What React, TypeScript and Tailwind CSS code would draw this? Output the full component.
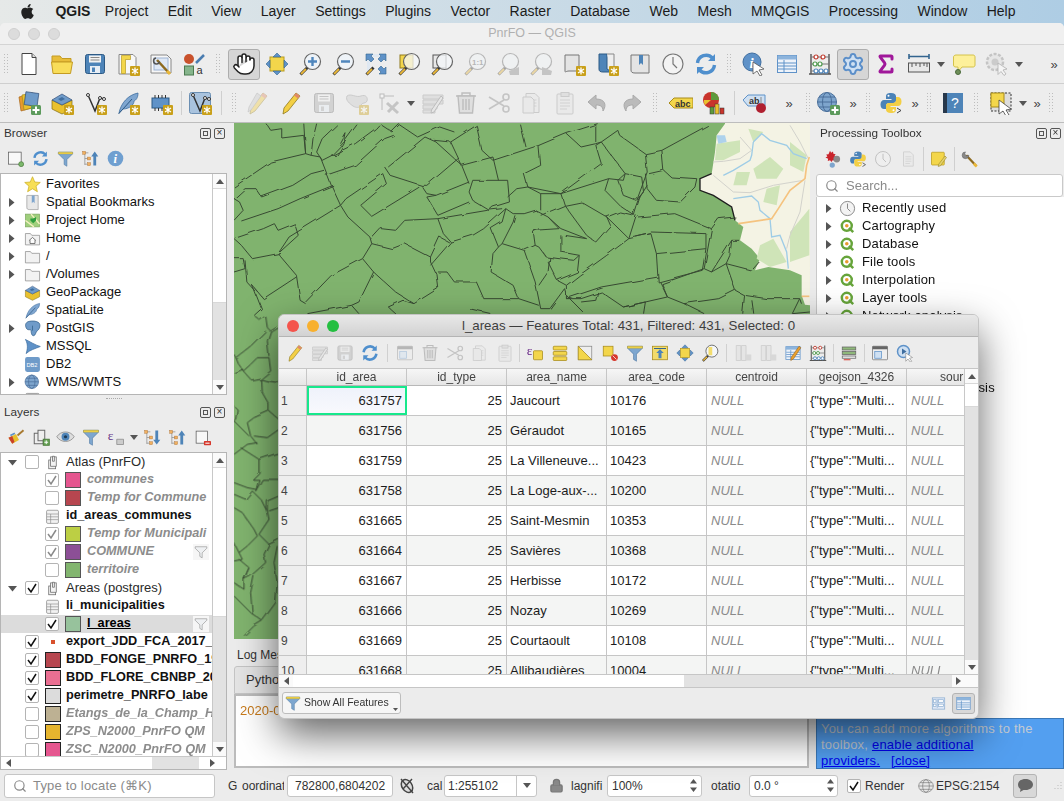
import { type ReactNode } from "react";
import { FaApple } from "react-icons/fa";
import { Hand, Search, Sigma, Settings, Lock } from "lucide-react";

// little badge with the asterisk used on the "new ..." actions
const Star = (
  <g>
    <rect x="14" y="14" width="10" height="10" rx="1" fill="#c9a01a" />
    <path d="M19 15.5v7M16 17l6 4M22 17l-6 4" stroke="#fff" strokeWidth="1.3" />
  </g>
);

const lens = (inner: ReactNode, fill = "#f4f7fa") => (
  <>
    <path d="M2.5 22.5l7-7" stroke="#333" strokeWidth="3" />
    <path d="M3 22l5-5" stroke="#eab83a" strokeWidth="1.8" />
    <circle cx="14.5" cy="9.5" r="8" fill={fill} stroke="#666" strokeWidth="1.2" />
    {inner}
  </>
);

const arrows = (
  <g fill="#5f92c8" stroke="#33648f" strokeWidth="0.6">
    <path d="M12 1l4 4h-8zM12 23l4-4h-8zM1 12l4-4v8zM23 12l-4-4v8z" />
  </g>
);

const refresh = (
  <g fill="none" stroke="#4f8fcd" strokeWidth="3.4">
    <path d="M3.5 11a8.7 8.7 0 0 1 15-5" />
    <path d="M20.5 13a8.7 8.7 0 0 1-15 5" />
    <path d="M21 2v7h-7zM3 22v-7h7z" fill="#4f8fcd" stroke="none" />
  </g>
);

const table = (
  <g>
    <rect x="2.5" y="3.5" width="19" height="17" fill="#eef3fa" stroke="#5f92c8" />
    <rect x="2.5" y="3.5" width="19" height="4" fill="#8db4dc" />
    <path d="M3 11h18M3 14h18M3 17h18M9 8v12" stroke="#5f92c8" />
  </g>
);

const doc = (
  <g>
    <path d="M6 2.5h9l4 4v15H6z" fill="#e8e8e8" stroke="#999" />
    <path d="M8.5 9h8M8.5 12h8M8.5 15h8M8.5 18h6" stroke="#aaa" />
  </g>
);

const filter = (
  <g>
    <path d="M2 3h20v2.5l-8 8V23l-4-2.5v-7l-8-8z" fill="#7da6cf" stroke="#45729d" strokeWidth="0.7" />
    <path d="M2 3h20v2.6H2z" fill="#f3d64b" stroke="#b99b1e" strokeWidth="0.5" />
  </g>
);

const floppy = (c: string, e: string) => (
  <g>
    <rect x="2.5" y="2.5" width="19" height="19" rx="2" fill={c} stroke={e} />
    <rect x="6" y="3.5" width="12" height="7" fill="#f2f2f2" />
    <path d="M7.5 5.5h9M7.5 8h9" stroke="#888" />
    <rect x="7" y="14" width="10" height="7" fill="#e8eef5" />
    <rect x="9" y="15.5" width="3" height="4.5" fill={c} />
  </g>
);

const python = (
  <g>
    <path d="M12 2c-4 0-5 1.5-5 3.5V8h5.5v1H5c-2 0-3.5 1.5-3.5 4.5S3 18 5 18h2v-3c0-2 1.5-3 3.5-3h4c1.5 0 2.5-1 2.5-2.5V5.5C17 3.5 15.5 2 12 2z" fill="#4b83b8" />
    <path d="M12 22c4 0 5-1.5 5-3.5V16h-5.5v-1H19c2 0 3.5-1.5 3.5-4.5S21 6 19 6h-2v3c0 2-1.5 3-3.5 3h-4C8 12 7 13 7 14.5v4C7 20.5 8.5 22 12 22z" fill="#f3cf45" />
    <circle cx="9.5" cy="4.8" r="1" fill="#fff" />
    <circle cx="14.5" cy="19.2" r="1" fill="#fff" />
  </g>
);

const clock = (
  <g fill="none" stroke="#777" strokeWidth="1.2">
    <circle cx="12" cy="12" r="10" fill="#f3f3f3" />
    <path d="M12 5v7l4 4" />
  </g>
);

const cursor = <path d="M13 11l9 6-4 1 3 4-2 1.5-3-4-3 3z" fill="#fff" stroke="#555" strokeWidth="0.8" />;

const pencil = (
  <g>
    <path d="M17 2l4 3-12 15-5 3 1-6z" fill="#f3cf45" stroke="#8f7a1e" strokeWidth="0.8" />
    <path d="M17 2l4 3-2 2.5-4-3z" fill="#e08a6a" />
  </g>
);

const feather = (
  <g>
    <path d="M3 22C5 12 12 4 22 2c0 5-2 7-4 8 0 4-5 8-11 8z" fill="#7fa6d0" stroke="#3f6ea0" strokeWidth="0.8" />
    <path d="M2.5 23L16 8" stroke="#2f5a85" />
  </g>
);

const vnode = (
  <g>
    <path d="M5 4l7 16 5-13 4 1" fill="none" stroke="#333" strokeWidth="1.5" />
    <circle cx="5" cy="4" r="1.5" fill="#fff" stroke="#333" />
    <circle cx="17" cy="7" r="1.5" fill="#fff" stroke="#333" />
    <circle cx="21" cy="8" r="1.5" fill="#fff" stroke="#333" />
  </g>
);

const box = (
  <g>
    <path d="M2 9l10 5 10-5v9l-10 5-10-5z" fill="#e9c12e" stroke="#806a10" strokeWidth="0.7" />
    <path d="M2 9l10-6 10 6-10 5z" fill="#6f9bc9" stroke="#33507a" strokeWidth="0.7" />
    <path d="M8 8l4-2 3 2-4 2z" fill="#3f6ea0" />
  </g>
);

const globe = (
  <g fill="none" stroke="#4a6f9a">
    <circle cx="11" cy="11" r="9.5" fill="#7ea5cd" />
    <ellipse cx="11" cy="11" rx="4.5" ry="9.5" />
    <path d="M1.5 11h19M3 6h16M3 16h16" />
  </g>
);

const qgis = (
  <g fill="none">
    <circle cx="11" cy="11" r="7" stroke="#66a43a" strokeWidth="3.5" />
    <path d="M14 14l6 6" stroke="#66a43a" strokeWidth="3.5" />
    <circle cx="11" cy="11" r="2.5" fill="#e89a2e" />
  </g>
);

const folderGrey = <path d="M2 5h7l2 2.5h11V21H2z" fill="#f2f2f2" stroke="#888" />;

const glyphs: Record<string, ReactNode> = {
  pan: <Hand x={0} y={0} width={24} height={24} color="#222" fill="#fff" strokeWidth={1.5} />,
  gear: <Settings x={0} y={0} width={24} height={24} color="#5c8fc9" fill="#cfe0f2" strokeWidth={2} />,
  sigma: <Sigma x={0} y={0} width={24} height={24} color="#a0189a" strokeWidth={3} />,
  newDoc: (
    <g>
      <path d="M5 1.5h10l4 4V22.5H5z" fill="#fff" stroke="#444" />
      <path d="M15 1.5v4h4" fill="#ddd" stroke="#444" />
    </g>
  ),
  folder: (
    <g>
      <path d="M2 4h8l2 2.5h9V10H2z" fill="#e8bd3a" stroke="#c49b22" />
      <path d="M1.5 10h21l-2 11.5H3z" fill="#f8dd5a" stroke="#c49b22" />
    </g>
  ),
  save: floppy("#4e84b8", "#2d5a85"),
  layout: (
    <g>
      <path d="M3 2.5h14l3 3V22H3z" fill="#f7f7f7" stroke="#888" />
      <path d="M5.5 3.5h9v4h-5v14h-4z" fill="#f3d64b" stroke="#b99b1e" strokeWidth="0.7" />
      {Star}
    </g>
  ),
  layoutMgr: (
    <g>
      <path d="M2 3h16l4 4v14H2z" fill="#f7f7f7" stroke="#888" />
      <rect x="5" y="6" width="14" height="12" fill="#dfe8f5" stroke="#9db4d4" />
      <path d="M8 8l12 13" stroke="#8d6a20" strokeWidth="2.5" />
      <path d="M7 6a3 3 0 1 0 3.5 3.5" fill="none" stroke="#555" strokeWidth="1.5" />
      <path d="M18 19l3 3" stroke="#eab83a" strokeWidth="3" />
    </g>
  ),
  style: (
    <g>
      <circle cx="7" cy="7" r="5" fill="#c9522c" />
      <path d="M14 11l8-8" stroke="#4a7cb0" strokeWidth="2.5" />
      <rect x="2.5" y="14" width="9" height="9" fill="#86b58c" stroke="#4b7a50" />
      <text x="14.5" y="22" fontSize="11" fill="#333">a</text>
    </g>
  ),
  panSel: (
    <g>
      <rect x="5" y="5" width="14" height="14" fill="#f3d64b" stroke="#b99b1e" />
      {arrows}
    </g>
  ),
  zoomIn: lens(<path d="M14.5 5v9M10 9.5h9" stroke="#4f86bd" strokeWidth="2.4" />, "#eef3f8"),
  zoomOut: lens(<path d="M10 9.5h9" stroke="#4f86bd" strokeWidth="2.4" />, "#eef3f8"),
  zoomFull: (
    <g>
      <path d="M3 2h18v3H6v15H3z" fill="#dfe8f2" />
      <g fill="#5f92c8" stroke="#33648f" strokeWidth="0.6">
        <path d="M2 2h7l-2 2 3 3-3 3-3-3-2 2zM22 2v7l-2-2-3 3-3-3 3-3-2-2zM22 22h-7l2-2-3-3 3-3 3 3 2-2z" />
      </g>
      <path d="M2.5 22.5l7-7" stroke="#333" strokeWidth="3" />
      <path d="M3 22l5-5" stroke="#eab83a" strokeWidth="1.8" />
    </g>
  ),
  zoomSel: (
    <g>
      <rect x="3" y="3" width="13" height="13" fill="#f3d64b" stroke="#8f7a1e" />
      {lens(null, "rgba(244,247,250,0.75)")}
    </g>
  ),
  zoomLayer: (
    <g>
      <rect x="3" y="3" width="13" height="13" fill="#e8e8e8" stroke="#555" />
      {lens(null, "rgba(244,247,250,0.75)")}
    </g>
  ),
  zoom11: lens(<text x="9" y="12.5" fontSize="8" fontWeight="bold" fill="#666">1:1</text>),
  zoomLast: lens(<path d="M23 15v8H14l-1-4zM17 19l4-3v6z" fill="#888" />),
  zoomNext: lens(<path d="M13 15v8h9l1-4z" fill="#888" />),
  bookNew: (
    <g>
      <path d="M3 3h14v16H7c-3 0-4 2-4 0z" fill="#e4e4e4" stroke="#777" />
      {Star}
    </g>
  ),
  bookBlue: (
    <g>
      <path d="M4 2h8v15l5 3H8c-3 0-4-1-4-3z" fill="#4e84b8" stroke="#2d5a85" />
      <path d="M12 2h7v18h-2" fill="#eee" stroke="#888" />
      {Star}
    </g>
  ),
  bookShow: (
    <g>
      <path d="M3 3h18v18H7c-3 0-4-1-4-3z" fill="#e4e4e4" stroke="#777" />
      <path d="M11 3h4v10l-2-2-2 2z" fill="#4e84b8" />
    </g>
  ),
  clock,
  refresh,
  identify: (
    <g>
      <circle cx="10" cy="10" r="9" fill="#5f92c8" stroke="#3f6ea0" />
      <text x="7.5" y="16" fontSize="15" fontStyle="italic" fontWeight="bold" fontFamily="Liberation Serif, serif" fill="#fff">i</text>
      <path d="M11 10l11 7-5 1 3 5-2 1-3-5-4 3z" fill="#fff" stroke="#555" strokeWidth="0.8" />
    </g>
  ),
  table,
  abacus: (
    <g>
      <path d="M3 2v20M21 2v20M1 22h22" stroke="#555" strokeWidth="1.4" />
      <path d="M3 5h18M3 12h18M3 19h18" stroke="#777" />
      <g fill="#fff" stroke="#c0392b" strokeWidth="1.2"><circle cx="8" cy="5" r="2" /><circle cx="15" cy="5" r="2" /></g>
      <g fill="#fff" stroke="#4d9a4d" strokeWidth="1.2"><circle cx="7" cy="12" r="2" /><circle cx="12" cy="12" r="2" /></g>
      <g fill="#fff" stroke="#4f86bd" strokeWidth="1.2"><circle cx="8" cy="19" r="2" /><circle cx="13" cy="19" r="2" /><circle cx="18" cy="19" r="2" /></g>
    </g>
  ),
  measure: (
    <g>
      <path d="M2 4.5h20M2 2v5M22 2v5" stroke="#33648f" strokeWidth="1.6" />
      <rect x="1.5" y="11" width="21" height="9" fill="#e8e8e8" stroke="#555" />
      <path d="M5 11v4M9 11v3M13 11v4M17 11v3M20 11v4" stroke="#555" />
    </g>
  ),
  tip: (
    <g>
      <path d="M4 3h17c1.5 0 2 1 2 2v8c0 1.5-1 2-2 2H10l-4 5v-5H4c-1.5 0-2.5-.5-2.5-2V5C1.5 4 2.5 3 4 3z" fill="#fdf09a" stroke="#d4c24a" />
      <circle cx="6" cy="20" r="2.5" fill="#6f8f5a" stroke="#4a6a3a" />
    </g>
  ),
  gearOff: (
    <g>
      <circle cx="10" cy="10" r="8" fill="#ddd" stroke="#888" strokeWidth="2.5" strokeDasharray="3 1.5" />
      <circle cx="10" cy="10" r="3.5" fill="#999" />
      {cursor}
    </g>
  ),
  addLayer: (
    <g>
      <path d="M2 6l11-3 2 14-11 3z" fill="#e89a2e" stroke="#a8651a" strokeWidth="0.7" />
      <path d="M5 4l11-2 2 14-11 3z" fill="#e9c12e" stroke="#a88b1a" strokeWidth="0.7" />
      <rect x="8" y="1.5" width="13" height="13" transform="rotate(8 14 8)" fill="#6f9bc9" stroke="#33507a" strokeWidth="0.7" />
      <rect x="14" y="14" width="10" height="10" rx="1.5" fill="#5c9a5c" />
      <path d="M19 15.5v7M15.5 19h7" stroke="#fff" strokeWidth="2" />
    </g>
  ),
  gpkg: <g>{box}{Star}</g>,
  vnode: <g>{vnode}{Star}</g>,
  feather: <g>{feather}{Star}</g>,
  chip: (
    <g>
      <rect x="3" y="7" width="17" height="10" fill="#5f92c8" stroke="#2d5a85" />
      <path d="M6 4v3M9.5 4v3M13 4v3M16.5 4v3M6 17v3M9.5 17v3M13 17v3" stroke="#333" />
      {Star}
    </g>
  ),
  vBlue: (
    <g>
      <rect x="1.5" y="1.5" width="21" height="21" rx="2" fill="#a9c3de" stroke="#6b8fb3" />
      {vnode}
      {Star}
    </g>
  ),
  pencils: <g>{pencil}<path d="M11 2l4 3-10 14-3 2 1-5z" fill="#ccc" stroke="#888" strokeWidth="0.6" /></g>,
  pencil,
  saveEdit: floppy("#aaa", "#777"),
  blob: (
    <g>
      <path d="M2 5c4-3 9 2 14 0s7 2 6 5-5 1-6 4-5 3-8 1-8-6-6-10z" fill="#ccc" stroke="#999" />
      {Star}
    </g>
  ),
  tools: (
    <g>
      <rect x="2" y="3" width="4" height="4" fill="#fff" stroke="#777" />
      <path d="M6 5h10M4 7v12" stroke="#777" />
      <path d="M9 12l11 10M20 11L10 21" stroke="#888" strokeWidth="3" />
    </g>
  ),
  tablePencil: (
    <g>
      <path d="M2 4h20v4H2zM2 9h20v4H2zM2 14h14v4H2zM2 19h12v3H2z" fill="#ccc" stroke="#999" />
      <path d="M20 5l2 2-9 14-3 1 .5-3z" fill="#ddd" stroke="#777" />
    </g>
  ),
  trash: (
    <g fill="none" stroke="#777" strokeWidth="1.4">
      <path d="M2 5h20M8 5V2h8v3" />
      <path d="M4 5l1.5 17h13L20 5z" fill="#ccc" />
      <path d="M9 8v11M12 8v11M15 8v11" />
    </g>
  ),
  scissors: (
    <g fill="none" stroke="#888" strokeWidth="1.6">
      <circle cx="19" cy="6" r="3" />
      <circle cx="19" cy="18" r="3" />
      <path d="M2 6l15 9M2 18l15-9" />
    </g>
  ),
  copy: (
    <g>
      {doc}
      <path d="M3 6h8l3 3v13H3z" fill="#e4e4e4" stroke="#999" />
    </g>
  ),
  paste: (
    <g>
      <rect x="4" y="3" width="16" height="20" rx="1" fill="#e4e4e4" stroke="#999" />
      <rect x="8" y="1.5" width="8" height="4" fill="#ccc" stroke="#999" />
      <path d="M7 9h10M7 12h10M7 15h10M7 18h7" stroke="#aaa" />
    </g>
  ),
  undo: <path d="M10 4L2 11l8 7v-4c4 0 7 1 7 6 4-6 2-12-7-12z" fill="#bbb" stroke="#aaa" />,
  redo: <path d="M14 4l8 7-8 7v-4c-4 0-7 1-7 6-4-6-2-12 7-12z" fill="#bbb" stroke="#aaa" />,
  abc: (
    <g>
      <path d="M0 12l5-5h19v10H5z" fill="#f3d64b" stroke="#a88b1a" />
      <text x="6" y="15.5" fontSize="9" fontWeight="bold" fill="#333">abc</text>
    </g>
  ),
  chart: (
    <g>
      <circle cx="9" cy="9" r="8" fill="#c9342c" />
      <path d="M9 9V1a8 8 0 0 1 8 8z" fill="#5c9a3c" />
      <path d="M9 9l-6 5a8 8 0 0 1-1-5z" fill="#e9c12e" />
      <rect x="13" y="13" width="4" height="10" fill="#e9c12e" stroke="#333" strokeWidth="0.5" />
      <rect x="18" y="17" width="4" height="6" fill="#c9342c" stroke="#333" strokeWidth="0.5" />
      <rect x="8" y="16" width="4" height="7" fill="#5c9a3c" stroke="#333" strokeWidth="0.5" />
    </g>
  ),
  abPin: (
    <g>
      <path d="M0 9l5-5h17v11H5z" fill="#cfe0f2" stroke="#5f92c8" />
      <text x="6" y="13" fontSize="9" fontWeight="bold" fill="#333">ab</text>
      <circle cx="18" cy="17" r="5" fill="#b02030" />
      <path d="M18 6v7" stroke="#888" />
    </g>
  ),
  globeAdd: (
    <g>
      {globe}
      <rect x="14" y="14" width="10" height="10" rx="1.5" fill="#5c9a5c" />
      <path d="M19 15.5v7M15.5 19h7" stroke="#fff" strokeWidth="2" />
    </g>
  ),
  python: (
    <g>
      {python}
      <path d="M18 17l4 2.5-4 2.5" fill="none" stroke="#444" />
    </g>
  ),
  help: (
    <g>
      <rect x="5" y="2" width="17" height="20" fill="#4e84b8" />
      <rect x="2" y="2" width="4" height="20" fill="#27384b" />
      <text x="10" y="17" fontSize="14" fill="#fff">?</text>
    </g>
  ),
  select: (
    <g>
      <rect x="2" y="2" width="20" height="18" fill="#ddd" stroke="#333" strokeDasharray="2 1.5" />
      <rect x="2" y="2" width="13" height="14" fill="#f3d64b" stroke="#a88b1a" />
      <path d="M10 9l12 9-5 1 3 5-3 1-3-5-4 3z" fill="#fff" stroke="#444" strokeWidth="0.8" />
    </g>
  ),
  newRect: (
    <g>
      <rect x="2" y="3" width="18" height="17" fill="#f8f8f8" stroke="#555" />
      <circle cx="20" cy="20" r="3.5" fill="#7cb86c" stroke="#4a7a3a" />
    </g>
  ),
  filter,
  tree: (
    <g>
      <path d="M4 4h5M4 4v17M4 12h5M4 20h5" stroke="#888" />
      <g fill="#f0b060" stroke="#b07030" strokeWidth="0.6">
        <rect x="1" y="2" width="4" height="4" /><rect x="8" y="10" width="4" height="4" /><rect x="8" y="18" width="4" height="4" />
      </g>
      <path d="M18 2l5 7h-3v13h-4V9h-3z" fill="#4e84b8" />
    </g>
  ),
  treeDown: (
    <g>
      <path d="M4 4h5M4 4v17M4 12h5M4 20h5" stroke="#888" />
      <g fill="#f0b060" stroke="#b07030" strokeWidth="0.6">
        <rect x="1" y="2" width="4" height="4" /><rect x="8" y="10" width="4" height="4" /><rect x="8" y="18" width="4" height="4" />
      </g>
      <path d="M18 22l5-7h-3V2h-4v13h-3z" fill="#4e84b8" />
    </g>
  ),
  info: (
    <g>
      <circle cx="12" cy="12" r="11" fill="#6f9fd0" />
      <text x="9" y="19" fontSize="18" fontStyle="italic" fontWeight="bold" fontFamily="Liberation Serif, serif" fill="#fff">i</text>
    </g>
  ),
  brush: (
    <g>
      <path d="M2 13l10-5 4 8-9 5z" fill="#e8c02e" />
      <path d="M2 13l5-2.5 3 8L7 21z" fill="#c9402c" />
      <path d="M14 10l8-7" stroke="#a87a30" strokeWidth="2.5" />
      <path d="M4 9l6-3 1 2-6 3z" fill="#5f92c8" />
    </g>
  ),
  addGroup: (
    <g fill="none" stroke="#666" strokeWidth="1.3">
      <rect x="3" y="7" width="12" height="14" fill="#eee" />
      <rect x="8" y="3" width="9" height="14" fill="#eee" />
      <rect x="15" y="15" width="8" height="8" fill="#6aa85a" stroke="#4a7a3a" />
      <path d="M19 16.5v5M16.5 19h5" stroke="#fff" />
    </g>
  ),
  eye: (
    <g>
      <path d="M1 11c5-8 17-8 22 0-5 8-17 8-22 0z" fill="#ddd" stroke="#888" />
      <circle cx="12" cy="11" r="5" fill="#4e84b8" />
      <circle cx="12" cy="11" r="2" fill="#1d3a55" />
    </g>
  ),
  epsilon: (
    <g>
      <text x="1" y="16" fontSize="18" fontFamily="Liberation Serif, serif" fill="#6a3a88">ε</text>
      <path d="M13 15h9v7h-9z" fill="#ccc" stroke="#888" />
    </g>
  ),
  removeRect: (
    <g>
      <rect x="3" y="3" width="16" height="17" fill="#f8f8f8" stroke="#555" />
      <rect x="14" y="17" width="10" height="6" rx="1" fill="#d6382c" />
      <path d="M16 20h6" stroke="#fff" strokeWidth="1.5" />
    </g>
  ),
  gearTools: (
    <g>
      <path d="M8 1l1.5 2.5L12 2l.5 3 3 .5-1.5 2.5 2.5 1.5L14 11l.5 3-3-.5L10 16l-2-2.5-3 1 .5-3L2 10l2.5-1.5L3 6l3-.5z" fill="#c9242c" />
      <circle cx="17" cy="12" r="4.5" fill="#8a8a8a" />
      <circle cx="11" cy="20" r="3.5" fill="#7ea5cd" />
    </g>
  ),
  docGrey: doc,
  editModel: (
    <g>
      <rect x="2" y="3" width="17" height="17" rx="1" fill="#f3d64b" stroke="#b99b1e" />
      <path d="M20 8l2 2-8 11-3 1 .5-3z" fill="#e4d26a" stroke="#8f7a1e" strokeWidth="0.7" />
    </g>
  ),
  wrench: (
    <g>
      <path d="M7 7l13 14" stroke="#8d6a20" strokeWidth="3" />
      <path d="M6 2.5a4.5 4.5 0 1 0 4.5 4.5L7 8 5 5z" fill="#888" stroke="#555" strokeWidth="0.6" />
      <path d="M17 18l4 4" stroke="#eab83a" strokeWidth="3.5" />
    </g>
  ),
  star: <path d="M12 1l3.2 7.5 7.8.6-6 5.2 1.9 7.9L12 18l-6.9 4.2L7 14.3 1 9.1l7.8-.6z" fill="#f7df55" stroke="#c9ad20" />,
  bookmarks: (
    <g>
      <path d="M4 2h16v20H8c-3 0-4-1-4-3z" fill="#e8e8e8" stroke="#999" />
      <path d="M11 2h4v11l-2-2-2 2z" fill="#7ea5cd" />
    </g>
  ),
  projectHome: (
    <g>
      <rect x="2" y="3" width="20" height="18" fill="#9fcf7c" stroke="#7ea860" />
      <path d="M2 12L14 21M10 3l12 14" stroke="#f4f0c0" strokeWidth="2" />
      <path d="M9 9l4 0 4-2 0 5-4 4-4-4z" fill="#2e9e3e" />
    </g>
  ),
  home: (
    <g>
      {folderGrey}
      <path d="M7 15l5-4.5 5 4.5M8.5 14.5V19h7v-4.5" fill="#fff" stroke="#444" />
    </g>
  ),
  folderGrey,
  box,
  featherPlain: feather,
  postgis: (
    <g>
      <path d="M7 2c4-1 11-1 14 2s1 9-2 11-2 6-5 7-4-4-4-7-5 1-7-4 0-8 4-9z" fill="#6f9bc9" stroke="#2d5a85" />
      <path d="M12 8v7" stroke="#2d5a85" />
    </g>
  ),
  mssql: <path d="M2 2c6 3 14 8 21 10-7 3-15 5-20 10 2-6 3-13-1-20z" fill="#5f92c8" stroke="#3f6ea0" />,
  db2: (
    <g>
      <rect x="1.5" y="1.5" width="21" height="21" rx="3" fill="#6f9bc9" />
      <text x="3.5" y="15" fontSize="8" fill="#fff">DB2</text>
    </g>
  ),
  globe,
  globeGrey: (
    <g fill="#e8e8e8" stroke="#777">
      <ellipse cx="12" cy="12" rx="11" ry="9.5" />
      <ellipse cx="12" cy="12" rx="5" ry="9.5" fill="none" />
      <path d="M1 12h22M3 7h18M3 17h18" fill="none" />
    </g>
  ),
  clockGrey: clock,
  qgis,
  groupLayer: (
    <g fill="#f3f3f3" stroke="#666" strokeWidth="1.2">
      <rect x="6" y="8" width="11" height="14" />
      <rect x="9" y="3" width="9" height="15" />
      <path d="M12 2h3v8h-3z" />
    </g>
  ),
  dbTable: (
    <g>
      <rect x="2.5" y="2" width="19" height="21" rx="2" fill="#f2f2f2" stroke="#777" />
      <path d="M3 8h18M3 12.5h18M3 17h18M9 8v15" stroke="#888" />
    </g>
  ),
  filterGrey: <path d="M2 3h20v2.5l-8 8V22l-4-2.5v-6l-8-8z" fill="#eef0f2" stroke="#888" />,
  panSelSmall: (
    <g>
      <rect x="6" y="6" width="12" height="12" fill="#f3d64b" stroke="#b99b1e" />
      {arrows}
    </g>
  ),
  exprSel: (
    <g>
      <rect x="10" y="9" width="12" height="12" rx="1" fill="#f3d64b" stroke="#a88b1a" />
      <text x="1" y="15" fontSize="18" fontFamily="Liberation Serif, serif" fill="#6a2a88">ε</text>
    </g>
  ),
  selectAll: (
    <g fill="#f3d64b" stroke="#a88b1a">
      <rect x="3" y="3" width="18" height="5" rx="1" />
      <rect x="3" y="10" width="18" height="5" rx="1" />
      <rect x="3" y="17" width="18" height="5" rx="1" />
    </g>
  ),
  invert: (
    <g>
      <rect x="3" y="3" width="18" height="18" fill="#eee" stroke="#888" />
      <path d="M3 3l18 18H3z" fill="#f3d64b" stroke="#a88b1a" />
    </g>
  ),
  deselect: (
    <g>
      <rect x="3" y="3" width="13" height="13" fill="#f3d64b" stroke="#a88b1a" />
      <circle cx="18" cy="18" r="4.5" fill="#d6382c" />
      <path d="M15.5 15.5l5 5" stroke="#fff" />
    </g>
  ),
  moveTop: (
    <g>
      <rect x="2" y="3" width="20" height="18" fill="#f3dc6a" stroke="#a88b1a" />
      <path d="M4 6h16" stroke="#33648f" strokeWidth="1.5" />
      <path d="M12 7l5 5h-3v7h-4v-7H7z" fill="#4e84b8" />
    </g>
  ),
  zoomSelSmall: lens(<path d="M10 4h5v11h-5z" fill="#f3d64b" opacity="0.8" />),
  colAdd: (
    <g>
      <path d="M3 2h6v20H3zM10 2h6v20h-6z" fill="#ddd" stroke="#999" />
      <rect x="15" y="14" width="8" height="8" fill="#bbb" />
    </g>
  ),
  tableEdit: (
    <g>
      {table}
      <path d="M20 3l2.5 2-10 15-3.5 2 .5-4z" fill="#e9a02e" stroke="#8d5a18" strokeWidth="0.7" />
    </g>
  ),
  calc: (
    <g>
      <rect x="3" y="4" width="18" height="4" fill="#8fb87a" stroke="#666" />
      <rect x="3" y="10" width="18" height="4" fill="#8fb87a" stroke="#666" />
      <rect x="3" y="16" width="18" height="3" fill="#eee" stroke="#666" />
      <path d="M5 21h9" stroke="#d6382c" strokeWidth="1.5" />
    </g>
  ),
  dock: (
    <g>
      <rect x="2" y="3" width="20" height="18" rx="1" fill="#eee" stroke="#777" />
      <rect x="2" y="3" width="20" height="4" fill="#666" />
      <rect x="5" y="10" width="9" height="9" fill="#cfe0f2" stroke="#5f92c8" />
    </g>
  ),
  actions: (
    <g>
      <circle cx="10" cy="10" r="8" fill="#cfe0f2" stroke="#5f92c8" strokeWidth="2" />
      <path d="M8 6l6 4-6 4z" fill="#3f6ea0" />
      <path d="M13 12l9 6-4 1 3 4-2 1-3-4-3 3z" fill="#fff" stroke="#777" strokeWidth="0.7" />
    </g>
  ),
  formView: (
    <g>
      <rect x="2" y="3" width="20" height="18" fill="#dfe8f5" stroke="#7ea5cd" />
      <path d="M10 5v14" stroke="#7ea5cd" />
      <rect x="4" y="6" width="4" height="4" fill="#fff" stroke="#7ea5cd" />
      <rect x="12" y="6" width="8" height="4" fill="#fff" stroke="#7ea5cd" />
      <rect x="4" y="13" width="4" height="4" fill="#fff" stroke="#7ea5cd" />
      <rect x="12" y="13" width="8" height="4" fill="#fff" stroke="#7ea5cd" />
    </g>
  ),
};

function Ic({ n, s = 24, off }: { n: string; s?: number; off?: boolean }) {
  return (
    <svg viewBox="0 0 24 24" width={s} height={s} className={off ? "opacity-40 shrink-0" : "shrink-0"}>
      {glyphs[n]}
    </svg>
  );
}

// toolbar slot, 33px wide like the Qt buttons
function T({ n, off, active }: { n: string; off?: boolean; active?: boolean }) {
  return (
    <div className="w-[33px] h-[32px] flex items-center justify-center shrink-0">
      <div className={active ? "w-[32px] h-[31px] flex items-center justify-center rounded-[3px] bg-[#d6d6d6] border border-[#adadad]" : "flex items-center justify-center"}>
        <Ic n={n} off={off} />
      </div>
    </div>
  );
}

function Handle({ className }: { className: string }) {
  return (
    <div className={`${className} h-[24px] flex items-center justify-center shrink-0`}>
      <svg width="5" height="22">
        {[1, 4, 7, 10, 13, 16, 19].map((y) => (
          <g key={y} fill="#bdbdbd">
            <rect x="0" y={y} width="1" height="1" />
            <rect x="3" y={y} width="1" height="1" />
          </g>
        ))}
      </svg>
    </div>
  );
}

const Sep = ({ className }: { className: string }) => (
  <div className={`${className} h-[24px] flex justify-center shrink-0`}>
    <div className="w-px h-full bg-[#cfcfcf]" />
  </div>
);

const Drop = ({ className }: { className: string }) => (
  <div className={`${className} flex justify-center shrink-0`}>
    <svg width="8" height="5"><path d="M0 0h8L4 5z" fill="#555" /></svg>
  </div>
);

const Chev = ({ className }: { className: string }) => (
  <div className={`${className} text-center text-[13px] leading-none text-[#444] shrink-0`}>»</div>
);

const Arrow = ({ down }: { down?: boolean }) => (
  <svg width="9" height="9" viewBox="0 0 9 9" className="shrink-0">
    {down ? <path d="M0 2h9L4.5 7.5z" fill="#555" /> : <path d="M2 0l5.5 4.5L2 9z" fill="#555" />}
  </svg>
);

function DockButtons() {
  return (
    <div className="flex gap-[3px]">
      <div className="w-[11px] h-[11px] border border-[#555] rounded-[2px] flex items-center justify-center">
        <div className="w-[5px] h-[5px] border border-[#555]" />
      </div>
      <div className="w-[11px] h-[11px] border border-[#555] rounded-[2px] flex items-center justify-center text-[10px] leading-none text-[#333]">×</div>
    </div>
  );
}

function ScrollV({ thumb, track }: { thumb: string; track: string }) {
  return (
    <div className="w-[14px] shrink-0 flex flex-col border-l border-[#c8c8c8] bg-[#fafafa]">
      <div className="h-[14px] flex items-center justify-center shrink-0">
        <svg width="8" height="5"><path d="M0 5h8L4 0z" fill="#555" /></svg>
      </div>
      <div className={`${thumb} border-y border-[#d8d8d8] bg-white`} />
      <div className={`${track} bg-[#e2e2e2]`} />
      <div className="h-[14px] flex items-center justify-center shrink-0 bg-[#fafafa]">
        <svg width="8" height="5"><path d="M0 0h8L4 5z" fill="#555" /></svg>
      </div>
    </div>
  );
}

const browserRows = [
  ["star", "Favorites", false],
  ["bookmarks", "Spatial Bookmarks", true],
  ["projectHome", "Project Home", true],
  ["home", "Home", true],
  ["folderGrey", "/", true],
  ["folderGrey", "/Volumes", true],
  ["box", "GeoPackage", false],
  ["featherPlain", "SpatiaLite", false],
  ["postgis", "PostGIS", true],
  ["mssql", "MSSQL", false],
  ["db2", "DB2", false],
  ["globe", "WMS/WMTS", true],
  ["dbTable", "", false],
] as const;

function Box({ on, dim }: { on?: boolean; dim?: boolean }) {
  return (
    <div className="w-[14px] h-[14px] shrink-0 bg-white border border-[#b4b4b4] rounded-[2px] flex items-center justify-center">
      {on && (
        <svg width="12" height="12" viewBox="0 0 12 12">
          <path d="M2 6l3 4 5-8" fill="none" stroke={dim ? "#8a8a8a" : "#111"} strokeWidth="1.5" />
        </svg>
      )}
    </div>
  );
}

const Swatch = ({ c, k }: { c: string; k?: boolean }) => (
  <div className={`w-[16px] h-[16px] shrink-0 border ${k ? "border-[#222]" : "border-[#555]"}`} style={{ background: c }} />
);

type Lay = { t: string; kind: "group" | "sub" | "table" | "top"; c?: string; on?: boolean; dim?: boolean; f?: boolean; sel?: boolean };

const layers: Lay[] = [
  { t: "Atlas (PnrFO)", kind: "group" },
  { t: "communes", kind: "sub", c: "#e5568f", on: true, dim: true },
  { t: "Temp for Commune", kind: "sub", c: "#b7464f", dim: true },
  { t: "id_areas_communes", kind: "table" },
  { t: "Temp for Municipali", kind: "sub", c: "#bccf44", on: true, dim: true },
  { t: "COMMUNE", kind: "sub", c: "#8c4f96", on: true, dim: true, f: true },
  { t: "territoire", kind: "sub", c: "#82b56f", dim: true },
  { t: "Areas (postgres)", kind: "group", on: true },
  { t: "li_municipalities", kind: "table" },
  { t: "l_areas", kind: "sub", c: "#97c29c", on: true, f: true, sel: true },
  { t: "export_JDD_FCA_2017_", kind: "top", on: true },
  { t: "BDD_FONGE_PNRFO_19", kind: "top", c: "#b7464f", on: true },
  { t: "BDD_FLORE_CBNBP_20", kind: "top", c: "#ea6f92", on: true },
  { t: "perimetre_PNRFO_labe", kind: "top", c: "#dcdcdc", on: true },
  { t: "Etangs_de_la_Champ_H", kind: "top", c: "#bdb193", dim: true },
  { t: "ZPS_N2000_PnrFO QM", kind: "top", c: "#e6b52e", dim: true },
  { t: "ZSC_N2000_PnrFO QM", kind: "top", c: "#e5568f", dim: true },
];

function LayerRow({ l }: { l: Lay }) {
  const text = l.sel
    ? "text-[12.7px] font-bold underline text-black"
    : l.kind === "group"
      ? "text-[13px] text-[#2a2a2a]"
      : l.dim
        ? "text-[12.7px] font-bold italic text-[#8c8c8c]"
        : "text-[12.7px] font-bold text-[#111]";
  return (
    <div className={`h-[18px] flex items-center relative whitespace-nowrap overflow-hidden ${l.sel ? "bg-[#dcdcdc]" : ""}`}>
      {l.kind === "group" && (
        <>
          <div className="w-[7px] shrink-0" />
          <Arrow down />
          <div className="w-[8px] shrink-0" />
          <Box on={l.on} />
          <div className="w-[5px] shrink-0" />
          <div className="w-[16px] shrink-0 flex justify-center"><Ic n="groupLayer" s={15} /></div>
          <div className="w-[6px] shrink-0" />
        </>
      )}
      {l.kind === "table" && (
        <>
          <div className="w-[44px] shrink-0" />
          <div className="w-[15px] shrink-0 flex justify-center"><Ic n="dbTable" s={15} /></div>
          <div className="w-[6px] shrink-0" />
        </>
      )}
      {l.kind === "sub" && (
        <>
          <div className="w-[44px] shrink-0" />
          <Box on={l.on} dim={l.dim} />
          <div className="w-[6px] shrink-0" />
          <Swatch c={l.c!} />
          <div className="w-[6px] shrink-0" />
        </>
      )}
      {l.kind === "top" && (
        <>
          <div className="w-[24px] shrink-0" />
          <Box on={l.on} />
          <div className="w-[6px] shrink-0" />
          {l.c ? <Swatch c={l.c} k /> : (
            <div className="w-[16px] shrink-0 flex justify-center"><div className="w-[4px] h-[4px] bg-[#d8502c]" /></div>
          )}
          <div className="w-[5px] shrink-0" />
        </>
      )}
      <span className={text}>{l.t}</span>
      {l.f && (
        <div className="absolute left-[192px] top-[1px] w-[16px] h-[16px] bg-[#f6f6f6] flex items-center justify-center">
          <Ic n="filterGrey" s={14} />
        </div>
      )}
    </div>
  );
}

const Cell25 = ({ n, s = 18 }: { n: string; s?: number }) => (
  <div className="w-[25px] shrink-0 flex justify-center"><Ic n={n} s={s} /></div>
);

function BrowserPanel() {
  return (
    <>
      <div className="h-[20px] flex items-center justify-between pl-[4px] pr-[2px] shrink-0">
        <span className="text-[11.75px] text-[#333]">Browser</span>
        <DockButtons />
      </div>
      <div className="h-[30px] flex items-center pl-[3px] shrink-0">
        {["newRect", "refresh", "filter", "tree", "info"].map((n) => (
          <Cell25 key={n} n={n} s={17} />
        ))}
      </div>
      <div className="h-[222px] flex border border-[#b5b5b5] bg-white shrink-0 overflow-hidden">
        <div className="flex-1 overflow-hidden pt-px">
          {browserRows.map(([icon, label, arrow], i) => (
            <div key={i} className="h-[18px] flex items-center">
              <div className="w-[6px] shrink-0" />
              <div className="w-[9px] shrink-0">{arrow && <Arrow />}</div>
              <div className="w-[6px] shrink-0" />
              <div className="w-[20px] shrink-0 flex justify-center"><Ic n={icon} s={17} /></div>
              <div className="w-[4px] shrink-0" />
              <span className="text-[13px] text-[#111]">{label}</span>
            </div>
          ))}
        </div>
        <ScrollV thumb="h-[115px]" track="flex-1" />
      </div>
    </>
  );
}

function LayersPanel() {
  return (
    <>
      <div className="h-[7px] flex items-center justify-center shrink-0">
        <div className="w-[16px] border-t border-dotted border-[#aaa]" />
      </div>
      <div className="h-[20px] flex items-center justify-between pl-[4px] pr-[2px] shrink-0">
        <span className="text-[11.75px] text-[#333]">Layers</span>
        <DockButtons />
      </div>
      <div className="h-[30px] flex items-center pl-[3px] shrink-0">
        <Cell25 n="brush" />
        <Cell25 n="addGroup" />
        <Cell25 n="eye" s={19} />
        <Cell25 n="filter" />
        <Cell25 n="epsilon" />
        <Drop className="w-[12px]" />
        <Cell25 n="treeDown" s={17} />
        <Cell25 n="tree" s={17} />
        <Cell25 n="removeRect" s={17} />
      </div>
      <div className="h-[318px] flex flex-col border border-[#b5b5b5] bg-white shrink-0 overflow-hidden">
        <div className="h-[303px] flex shrink-0">
          <div className="w-[211px] overflow-hidden">
            {layers.map((l) => (
              <LayerRow key={l.t} l={l} />
            ))}
          </div>
          <ScrollV thumb="h-[150px]" track="flex-1" />
        </div>
        <div className="flex-1 flex items-center border-t border-[#c8c8c8]">
          <div className="w-[14px] flex justify-center"><svg width="5" height="8"><path d="M5 0v8L0 4z" fill="#555" /></svg></div>
          <div className="w-[137px] h-full bg-white" />
          <div className="w-[47px] h-full bg-[#e2e2e2]" />
          <div className="flex-1 flex justify-center"><svg width="5" height="8"><path d="M0 0v8l5-4z" fill="#555" /></svg></div>
        </div>
      </div>
    </>
  );
}

// map boundaries, coordinates read off the canvas at 2.72 x 3 scale
const boundaries = [
  "90,8 100,25 130,20 130,48 190,40 195,95 100,120 60,150 0,195",
  "190,5 195,95 210,100 235,105 265,190 290,250",
  "225,5 215,50 210,100",
  "280,8 240,50 225,90 240,115 330,65 385,20 395,8",
  "335,8 300,60 265,100 280,100 300,65 305,35 290,65",
  "0,230 30,200 60,200 75,225 160,190 210,155 245,145",
  "250,160 330,130 410,50 435,40",
  "0,295 25,265 15,240 0,230",
  "20,297 120,260 180,230 270,190",
  "290,250 150,345 120,395 50,410 20,370 0,350",
  "120,395 170,460 180,535 195,545",
  "0,350 80,320 110,305 120,325 165,305 175,340 120,395",
  "290,250 310,285 370,345 375,365 350,410 265,460 195,540",
  "375,365 430,380 465,365 535,405 560,345 585,360",
  "350,410 380,450 440,510 490,545 555,500 550,455 535,420 535,405",
  "555,450 580,450 600,480 660,480 680,530 775,530 830,550",
  "380,450 340,540 320,550 200,575",
  "375,350 400,320 440,325 465,295 555,290 570,335 590,360 650,340 680,320 740,260 760,275 790,275 820,265",
  "555,290 690,265 730,260",
  "415,185 405,155 305,230 290,250",
  "415,185 345,250 375,283 505,195",
  "410,135 425,160 510,190 525,190 610,110",
  "420,135 520,45 550,60 600,110 620,130 640,185",
  "640,180 550,220 525,225 555,280 640,240",
  "510,190 525,215 550,220",
  "650,235 695,265 705,255 750,240 745,175 650,175 640,210 650,235",
  "620,130 705,105 720,175",
  "705,115 830,70 835,130 790,155 800,195",
  "830,70 905,35 945,75 985,65 1000,60",
  "905,35 990,5",
  "780,8 795,75",
  "660,10 675,85 705,115",
  "660,10 590,60 620,130",
  "590,60 545,55",
  "450,8 500,45 560,15 600,30",
  "400,8 430,30 450,8",
  "745,225 770,200 800,195 835,215 835,265",
  "800,195 890,215 1000,125 985,70 1000,60 1065,155 1060,175 1020,170 890,215",
  "835,215 890,215 900,250 945,240 1015,285 1050,270 1090,280 1105,225",
  "835,280 900,250",
  "900,250 960,340 985,360 1025,310 1015,285 1075,350 1095,280",
  "855,285 890,320 960,350",
  "1100,285 1200,275 1300,320",
  "820,265 855,285",
  "1075,350 1015,400 940,460 905,490",
  "1095,345 1135,335 1150,395 1285,380 1285,335 1135,330",
  "1150,395 1155,480 1275,445 1285,380",
  "1155,465 1000,495 905,530 945,530 1000,510 1060,555 1180,525 1160,480",
  "1135,335 1075,350",
  "1300,320 1280,440 1300,450 1355,355 1375,355",
  "1300,320 1320,290 1365,285",
  "1280,440 1165,485 1180,525 1225,545 1320,530 1365,505 1340,425 1300,450",
  "1340,425 1410,445 1430,420",
  "1365,505 1390,520 1450,530 1540,530 1545,545",
  "1355,355 1350,400 1340,425",
  "1100,225 1125,150 1120,95 1165,85 1170,145 1130,155",
  "1165,85 1290,10",
  "1170,145 1190,165 1260,170 1255,195 1215,240 1150,235 1125,200 1120,155",
  "1125,190 1100,235 1085,280",
  "1020,170 1010,205 1050,250 1090,280",
  "1065,155 1045,175 1060,220 1095,235 1115,210 1110,165 1065,155",
  "1000,60 1045,25 1050,40 1120,95",
  "985,8 985,60",
  "830,320 815,330 820,370 790,385 730,365 760,300 765,280",
  "740,260 730,300 700,320 720,375 730,365",
  "815,325 885,320 855,285",
  "890,340 890,390 940,400 925,415 885,410 850,405 830,375 820,370",
  "960,350 900,340",
  "720,375 705,395 700,450 760,490 775,530",
  "790,385 820,480 835,560",
  "860,405 855,450 830,490",
  "855,420 880,475 935,450 940,400",
  "880,475 905,490 905,530",
  "590,360 535,430",
  "640,560 700,575",
  "1060,555 1120,540 1115,575",
  "1225,545 1280,575",
  "1390,520 1385,575",
  "1410,535 1415,575",
  "1540,530 1520,575 1568,570",
  "490,545 460,535 420,555 440,575",
  "320,550 340,575",
  "835,560 860,560 900,500 905,520 950,570",
  "990,510 985,535 945,540",
  "170,465 80,530 50,490 75,560 55,580",
  "30,415 35,480 60,510",
  "0,450 30,440 25,410 0,410",
];

const strip = [
  "62,0 75,10 88,0",
  "95,0 100,35 110,45 135,30",
  "110,45 100,75 105,120",
  "95,45 50,90 5,125",
  "0,115 10,140 28,165 55,195 80,190 110,165 105,125 70,125 50,145 28,165",
  "0,170 28,160",
  "80,190 82,225 105,265 105,285 60,305 40,320 50,360 70,385",
  "105,285 135,310 135,340 100,365 60,360",
  "135,200 100,195 82,190",
  "0,270 10,280 5,310 0,315 45,360",
  "70,380 40,385 20,400 0,415",
  "20,395 75,430 75,470 55,490 75,490 65,525 85,490 135,490",
  "0,500 40,515 65,520",
  "75,430 135,410",
  "0,535 35,550 55,525 85,555 100,585 105,610 75,655",
  "100,585 100,555 135,540",
  "105,585 135,575 135,645",
  "0,575 25,590 60,640 70,660 40,690 15,710 0,680",
  "15,710 25,730 0,735",
  "75,655 105,685 135,670",
  "105,685 90,715 95,740 50,780 30,790 45,755",
  "15,730 45,755 30,790 30,820 0,800",
  "130,690 120,740 130,800 125,860 85,915",
  "60,780 50,830 55,895",
  "0,840 50,890 85,915 60,930 30,960",
];

function MapCanvas() {
  return (
    <svg viewBox="234 123 576 516" width="576" height="516" className="block shrink-0 bg-[#80b36e]">
      <defs>
        <filter id="wiggle" x="0" y="0" width="1" height="1">
          <feTurbulence type="fractalNoise" baseFrequency="0.07" numOctaves="1" seed="4" />
          <feDisplacementMap in="SourceGraphic" scale="4" />
        </filter>
      </defs>
      <g transform="translate(690 122) scale(0.3333)">
        <polygon points="105,5 80,40 75,90 65,155 30,170 30,205 70,220 125,255 135,295 160,315 150,355 185,380 210,410 195,445 235,435 300,445 335,460 335,520 345,548 360,550 360,0 105,0" fill="#f4f3e4" />
        <g fill="#cfe4b8">
          <polygon points="80,65 150,55 150,90 100,115 75,115" />
          <polygon points="190,140 240,105 280,140 260,170 200,170" />
          <polygon points="140,150 180,150 170,190 130,190" />
          <polygon points="300,330 358,260 358,400 300,420" />
          <polygon points="210,370 250,350 290,420 240,435 200,410" />
          <polygon points="175,20 220,30 190,60" />
          <polygon points="230,200 270,190 260,250 220,240" />
          <polygon points="300,60 350,100 340,150 300,130" />
        </g>
        <polygon points="80,40 105,40 110,60 85,65" fill="#aed2ec" />
        <g fill="none" stroke="#d2d2cc" strokeWidth="3">
          <polyline points="150,45 185,85 150,110 100,118 70,120" />
          <polyline points="70,160 130,210 180,212 250,190 340,175" />
          <polyline points="345,175 330,270 300,340 290,380" />
          <polyline points="300,10 330,60 355,110" />
        </g>
        <g fill="none" stroke="#9ecce6" strokeWidth="4">
          <polyline points="190,60 215,35 240,55 290,70 310,95 350,110" />
          <polyline points="190,60 185,100 180,115 130,145 100,160" />
          <polyline points="130,230 185,222 205,240 210,265 240,290 245,345 270,340 290,390 295,440" />
        </g>
        <g fill="none" stroke="#f5c37f" strokeWidth="5">
          <polyline points="145,305 245,290 265,260 300,205 345,170 350,130 358,105" />
          <polyline points="335,523 358,523" />
        </g>
        <polyline points="65,155 30,170 30,205 70,220 125,255 135,295" fill="none" stroke="#1f1f1f" strokeWidth="4" />
      </g>
      <g fill="none" stroke="#384a33" strokeWidth="1" strokeLinejoin="round" filter="url(#wiggle)">
        <g transform="translate(234 122) scale(0.3673 0.3333)">
          {boundaries.map((p) => (
            <polyline key={p} points={p} vectorEffect="non-scaling-stroke" />
          ))}
        </g>
        <g transform="translate(234 316) scale(0.3333)">
          {strip.map((p) => (
            <polyline key={p} points={p} vectorEffect="non-scaling-stroke" />
          ))}
        </g>
      </g>
    </svg>
  );
}

const processingRows: [string, string][] = [
  ["clockGrey", "Recently used"],
  ["qgis", "Cartography"],
  ["qgis", "Database"],
  ["qgis", "File tools"],
  ["qgis", "Interpolation"],
  ["qgis", "Layer tools"],
  ["qgis", "Network analysis"],
  ["qgis", "Plots"],
  ["qgis", "Raster analysis"],
  ["qgis", "Raster creation"],
  ["qgis", "Raster terrain analysis"],
  ["qgis", "Raster tools"],
  ["qgis", "Vector analysis"],
];

function ProcessingPanel() {
  return (
    <div className="w-[253px] shrink-0 flex flex-col">
      <div className="h-[20px] flex items-center justify-between pl-[9px] pr-[3px] shrink-0">
        <span className="text-[11.75px] text-[#333]">Processing Toolbox</span>
        <DockButtons />
      </div>
      <div className="h-[31px] flex items-center pl-[9px] shrink-0">
        <Cell25 n="gearTools" />
        <Cell25 n="python" />
        <div className="w-[25px] shrink-0 flex justify-center"><Ic n="clock" s={18} off /></div>
        <div className="w-[25px] shrink-0 flex justify-center"><Ic n="docGrey" s={18} off /></div>
        <Sep className="w-[6px]" />
        <Cell25 n="editModel" />
        <Sep className="w-[6px]" />
        <Cell25 n="wrench" />
      </div>
      <div className="h-[23px] ml-[5px] w-[247px] bg-white border border-[#c9c9c9] rounded-[3px] flex items-center pl-[8px] shrink-0">
        <Search size={14} color="#888" />
        <span className="ml-[7px] text-[13px] text-[#8a8a8a]">Search...</span>
      </div>
      <div className="h-[521px] ml-[5px] bg-white border-l border-[#c9c9c9] overflow-hidden shrink-0 pt-[2px]">
        {processingRows.map(([icon, label]) => (
          <div key={label} className="h-[18px] flex items-center whitespace-nowrap">
            <div className="w-[7px] shrink-0" />
            <Arrow />
            <div className="w-[6px] shrink-0" />
            <Ic n={icon} s={17} />
            <div className="w-[6px] shrink-0" />
            <span className="text-[13px] tracking-[0.15px] text-[#111]">{label}</span>
          </div>
        ))}
      </div>
      <div className="h-[51px] ml-[5px] w-[248px] bg-[#539ff0] border border-[#3a78b8] px-[4px] py-[2px] text-[13px] leading-[16px] tracking-[0.2px] text-[#c3cbd3] shrink-0 whitespace-nowrap">
        You can add more algorithms to the
        <br />
        toolbox, <span className="text-[#0000ee] underline">enable additional</span>
        <br />
        <span className="text-[#0000ee] underline">providers.</span>
        <span className="ml-[11px] text-[#0000ee] underline">[close]</span>
      </div>
    </div>
  );
}

const rows = [
  ["631757", "Jaucourt", "10176"],
  ["631756", "Géraudot", "10165"],
  ["631759", "La Villeneuve...", "10423"],
  ["631758", "La Loge-aux-...", "10200"],
  ["631665", "Saint-Mesmin", "10353"],
  ["631664", "Savières", "10368"],
  ["631667", "Herbisse", "10172"],
  ["631666", "Nozay", "10269"],
  ["631669", "Courtaoult", "10108"],
  ["631668", "Allibaudières", "10004"],
];

const heads = ["id_area", "id_type", "area_name", "area_code", "centroid", "geojson_4326"];
const cell = "w-[100px] h-full shrink-0 border-r border-[#c6c6c6] flex items-center overflow-hidden whitespace-nowrap";

function W({ n, off }: { n: string; off?: boolean }) {
  return (
    <div className="w-[25px] flex justify-center shrink-0">
      <Ic n={n} s={18} off={off} />
    </div>
  );
}

const Sep2 = ({ className }: { className: string }) => (
  <div className={`${className} h-[18px] flex justify-center shrink-0`}>
    <div className="w-px h-full bg-[#d0d0d0]" />
  </div>
);

function AttributeTable() {
  return (
    <div className="absolute left-[279px] top-[315px] w-[699px] h-[403px] rounded-[5px] overflow-hidden flex flex-col bg-[#ececec] shadow-[0_16px_40px_rgba(0,0,0,0.62)] outline outline-[#c4c4c4]">
      <div className="h-[22px] shrink-0 relative flex items-center justify-center pt-px bg-linear-to-b from-[#e8e8e8] to-[#d2d2d2] border-b border-[#b4b4b4]">
        <div className="absolute left-[8px] top-[5px] flex gap-[8px]">
          <div className="w-[12px] h-[12px] rounded-full bg-[#f4544c]" />
          <div className="w-[12px] h-[12px] rounded-full bg-[#f8b02e]" />
          <div className="w-[12px] h-[12px] rounded-full bg-[#24bf40]" />
        </div>
        <span className="text-[13.3px] text-[#3e3e3e]">l_areas — Features Total: 431, Filtered: 431, Selected: 0</span>
      </div>
      <div className="h-[31px] shrink-0 flex items-center pl-[3px] bg-[#ececec]">
        <W n="pencil" />
        <W n="tablePencil" off />
        <W n="saveEdit" off />
        <W n="refresh" />
        <Sep2 className="w-[10px]" />
        <W n="dock" off />
        <W n="trash" off />
        <W n="scissors" off />
        <W n="copy" off />
        <W n="paste" off />
        <Sep2 className="w-[5px]" />
        <W n="exprSel" />
        <W n="selectAll" />
        <W n="invert" />
        <W n="deselect" />
        <W n="filter" />
        <W n="moveTop" />
        <W n="panSelSmall" />
        <W n="zoomSelSmall" />
        <Sep2 className="w-[8px]" />
        <W n="colAdd" off />
        <W n="colAdd" off />
        <W n="tableEdit" />
        <W n="abacus" />
        <Sep2 className="w-[6px]" />
        <W n="calc" />
        <Sep2 className="w-[6px]" />
        <W n="dock" />
        <W n="actions" />
      </div>
      <div className="h-[306px] shrink-0 flex border-t border-[#c6c6c6] overflow-hidden">
        <div className="w-[685px] shrink-0 flex flex-col">
          <div className="h-[17px] shrink-0 flex items-center bg-linear-to-b from-[#f6f6f6] to-[#e6e6e6] border-b border-[#b8b8b8] text-[12px] text-[#444]">
            <div className="w-[28px] h-full shrink-0 border-r border-[#c6c6c6]" />
            {heads.map((h) => (
              <div key={h} className={`${cell} justify-center`}>{h}</div>
            ))}
            <div className="w-[57px] overflow-hidden pl-[33px] whitespace-nowrap">sour</div>
          </div>
          {rows.map((r, i) => (
            <div key={r[0]} className={`h-[30px] shrink-0 flex items-center border-b border-[#c6c6c6] text-[13px] text-[#1c1c1c] ${i % 2 ? "bg-[#f4f5f4]" : "bg-white"}`}>
              <div className="w-[28px] h-full shrink-0 border-r border-[#c6c6c6] bg-[#eeeeee] flex items-center pl-[2px] text-[12px] text-[#444]">{i + 1}</div>
              <div className={i === 0 ? "w-[100px] h-full shrink-0 border-2 border-[#17e88c] bg-linear-to-b from-[#eff2fb] to-[#f8f9fd] flex items-center justify-end pr-[3px]" : `${cell} justify-end pr-[4px]`}>{r[0]}</div>
              <div className={`${cell} justify-end pr-[4px]`}>25</div>
              <div className={`${cell} pl-[3px]`}>{r[1]}</div>
              <div className={`${cell} pl-[3px]`}>{r[2]}</div>
              <div className={`${cell} pl-[4px] italic text-[#8a8a8a]`}>NULL</div>
              <div className={`${cell} pl-[3px]`}>{'{"type":"Multi...'}</div>
              <div className="w-[57px] h-full flex items-center pl-[4px] italic text-[#8a8a8a]">NULL</div>
            </div>
          ))}
        </div>
        <ScrollV thumb="h-[24px]" track="flex-1" />
      </div>
      <div className="h-[14px] shrink-0 flex items-center border-y border-[#c6c6c6] bg-[#fafafa]">
        <div className="w-[14px] flex justify-center"><svg width="5" height="8"><path d="M5 0v8L0 4z" fill="#555" /></svg></div>
        <div className="w-[391px] h-full bg-white" />
        <div className="w-[268px] h-full bg-[#e2e2e2]" />
        <div className="w-[12px] flex justify-center"><svg width="5" height="8"><path d="M0 0v8l5-4z" fill="#555" /></svg></div>
      </div>
      <div className="flex-1 flex items-center pl-[3px] pr-[3px] bg-[#ececec]">
        <div className="w-[119px] h-[22px] relative flex items-center pl-[2px] bg-[#f6f6f6] border border-[#bdbdbd] rounded-[3px]">
          <Ic n="filter" s={16} />
          <span className="ml-[3px] text-[10.5px] text-[#333] whitespace-nowrap">Show All Features</span>
          <svg width="5" height="3" className="absolute right-[2px] bottom-[2px]"><path d="M0 0h5L2.5 3z" fill="#555" /></svg>
        </div>
        <div className="ml-auto mr-[3px]"><Ic n="formView" s={15} /></div>
        <div className="ml-[3px] w-[23px] h-[21px] rounded-[3px] bg-[#d8d8d8] border border-[#b4b4b4] flex items-center justify-center">
          <Ic n="table" s={17} />
        </div>
      </div>
    </div>
  );
}

const menus = ["Project", "Edit", "View", "Layer", "Settings", "Plugins", "Vector", "Raster", "Database", "Web", "Mesh", "MMQGIS", "Processing", "Window", "Help"];

const spinner = (
  <svg width="7" height="15" className="shrink-0">
    <path d="M3.5 1L7 5.5H0zM0 9.5h7L3.5 14z" fill="#555" />
  </svg>
);

function StatusBar() {
  return (
    <div className="h-[31px] shrink-0 flex items-center text-[12px] text-[#333] bg-[#ececec] whitespace-nowrap">
      <div className="ml-[4px] w-[211px] h-[24px] shrink-0 bg-white border border-[#c6c6c6] rounded-[3px] flex items-center pl-[8px]">
        <Search size={14} color="#888" />
        <span className="ml-[6px] text-[13px] tracking-[0.2px] text-[#8a8a8a]">Type to locate (⌘K)</span>
      </div>
      <span className="ml-[13px] w-[10px] shrink-0">G</span>
      <span className="ml-[4px] w-[42px] shrink-0 overflow-hidden">oordinat</span>
      <div className="ml-[3px] w-[106px] h-[22px] shrink-0 bg-white border border-[#c6c6c6] rounded-[3px] flex items-center pl-[7px]">782800,6804202</div>
      <div className="ml-[5px] w-[18px] shrink-0 flex justify-center">
        <svg viewBox="0 0 18 18" width="18" height="18">
          <ellipse cx="9" cy="9" rx="5" ry="7" transform="rotate(-35 9 9)" fill="#ddd" stroke="#444" strokeWidth="1.5" />
          <path d="M3 2l12 14M14 2L5 12" stroke="#444" strokeWidth="1.4" />
        </svg>
      </div>
      <span className="ml-[11px] w-[16px] shrink-0 overflow-hidden">cal</span>
      <div className="ml-[1px] w-[93px] h-[22px] shrink-0 bg-white border border-[#c6c6c6] rounded-[3px] flex items-center">
        <span className="w-[72px] pl-[3px] border-r border-[#c6c6c6] leading-[20px]">1:255102</span>
        <div className="flex-1 flex justify-center"><svg width="8" height="5"><path d="M0 0h8L4 5z" fill="#555" /></svg></div>
      </div>
      <div className="ml-[11px] w-[16px] shrink-0 flex justify-center"><Lock size={15} color="#777" fill="#888" /></div>
      <span className="ml-[7px] w-[33px] shrink-0 overflow-hidden">lagnifi</span>
      <div className="ml-[3px] w-[95px] h-[22px] shrink-0 bg-white border border-[#c6c6c6] rounded-[3px] flex items-center justify-between pl-[4px] pr-[4px]">
        100%
        {spinner}
      </div>
      <span className="ml-[9px] w-[33px] shrink-0 overflow-hidden">otatio</span>
      <div className="ml-[5px] w-[89px] h-[22px] shrink-0 bg-white border border-[#c6c6c6] rounded-[3px] flex items-center justify-between pl-[4px] pr-[3px]">
        0.0 °
        {spinner}
      </div>
      <div className="ml-[9px]"><Box on /></div>
      <span className="ml-[4px] w-[38px] shrink-0">Render</span>
      <div className="ml-[15px] w-[16px] shrink-0"><Ic n="globeGrey" s={16} /></div>
      <span className="ml-[2px] w-[60px] shrink-0">EPSG:2154</span>
      <div className="ml-[17px] w-[24px] h-[24px] shrink-0 bg-[#d8d8d8] border border-[#b4b4b4] rounded-[3px] flex items-center justify-center">
        <svg width="17" height="15" viewBox="0 0 17 15"><path d="M8.5 1c4.5 0 7.5 2.5 7.5 5.5S13 12 8.5 12c-1 0-1.5 0-2 0L3 14l.5-3C2 10 1 8.5 1 6.5 1 3.5 4 1 8.5 1z" fill="#666" /></svg>
      </div>
      <svg width="10" height="10" className="ml-auto mr-[2px]"><path d="M9 1v1M6 4v1M9 4v1M3 7v1M6 7v1M9 7v1" stroke="#bbb" /></svg>
    </div>
  );
}

export default function App() {
  return (
    <div className="relative w-[1064px] h-[801px] overflow-hidden flex flex-col [font-family:'Liberation_Sans',Arial,sans-serif] bg-linear-to-r from-[#e6e9e8] to-[#aecde4]">
      {/* mac menu bar */}
      <div className="h-[23px] shrink-0 flex items-center text-[14px] text-[#1b1b1b] pl-[19px] gap-[19.4px]">
        <FaApple size={17} color="#222" />
        <span className="font-bold -mr-[5px]">QGIS</span>
        {menus.map((m) => (
          <span key={m}>{m}</span>
        ))}
      </div>

      <div className="flex-1 flex flex-col rounded-t-[5px] overflow-hidden bg-[#ececec]">
        <div className="h-[22px] shrink-0 relative flex items-center justify-center bg-[#f0f0f0] border-b border-[#d4d4d4]">
          <div className="absolute left-[8px] top-[5px] flex gap-[8px]">
            <div className="w-[12px] h-[12px] rounded-full bg-[#dcdcdc] border border-[#cfcfcf]" />
            <div className="w-[12px] h-[12px] rounded-full bg-[#dcdcdc] border border-[#cfcfcf]" />
            <div className="w-[12px] h-[12px] rounded-full bg-[#dcdcdc] border border-[#cfcfcf]" />
          </div>
          <span className="text-[12.5px] text-[#b0b0b0]">PnrFO — QGIS</span>
        </div>

        {/* first toolbar row */}
        <div className="h-[39px] shrink-0 flex items-center border-b border-[#cfcfcf] bg-[#ededed]">
          <Handle className="w-[12px]" />
          {["newDoc", "folder", "save", "layout", "layoutMgr", "style"].map((n) => <T key={n} n={n} />)}
          <Handle className="w-[17px]" />
          <T n="pan" active />
          <T n="panSel" />
          <T n="zoomIn" />
          <T n="zoomOut" />
          <T n="zoomFull" />
          <T n="zoomSel" />
          <T n="zoomLayer" />
          <T n="zoom11" off />
          <T n="zoomLast" off />
          <T n="zoomNext" off />
          <T n="bookNew" />
          <T n="bookBlue" />
          <T n="bookShow" />
          <T n="clock" />
          <T n="refresh" />
          <Handle className="w-[15px]" />
          <T n="identify" />
          <T n="table" />
          <T n="abacus" />
          <T n="gear" active />
          <T n="sigma" />
          <T n="measure" />
          <Drop className="w-[12px]" />
          <T n="tip" />
          <T n="gearOff" off />
          <Drop className="w-[12px]" />
          <Chev className="ml-auto w-[20px]" />
        </div>

        {/* second toolbar row */}
        <div className="h-[39px] shrink-0 flex items-center border-b border-[#bdbdbd] bg-[#ededed]">
          <Handle className="w-[12px]" />
          {["addLayer", "gpkg", "vnode", "feather", "chip"].map((n) => <T key={n} n={n} />)}
          <Sep className="w-[8px]" />
          <div className="w-[30px] flex justify-center shrink-0"><Ic n="vBlue" /></div>
          <Sep className="w-[12px]" />
          <Handle className="w-[14px]" />
          <T n="pencils" off />
          <T n="pencil" />
          <T n="saveEdit" off />
          <T n="blob" off />
          <T n="tools" off />
          <Drop className="w-[10px]" />
          <T n="tablePencil" off />
          <T n="trash" off />
          <T n="scissors" off />
          <T n="copy" off />
          <T n="paste" off />
          <T n="undo" />
          <T n="redo" />
          <Handle className="w-[17px]" />
          <T n="abc" />
          <T n="chart" />
          <Sep className="w-[8px]" />
          <T n="abPin" />
          <Chev className="ml-[2px] w-[32px]" />
          <Handle className="w-[6px]" />
          <T n="globeAdd" />
          <Chev className="w-[18px]" />
          <Handle className="w-[12px]" />
          <T n="python" />
          <Chev className="w-[16px]" />
          <Handle className="w-[13px]" />
          <T n="help" />
          <Handle className="w-[15px]" />
          <T n="select" />
          <Drop className="w-[12px]" />
          <Chev className="w-[16px]" />
          <Handle className="w-[12px]" />
        </div>

        <div className="flex-1 flex min-h-0">
          <div className="w-[234px] shrink-0 flex flex-col pr-[7px]">
            <BrowserPanel />
            <LayersPanel />
          </div>
          <div className="w-[577px] shrink-0 flex flex-col">
            <MapCanvas />
            <div className="h-[27px] pl-[3px] flex items-end text-[12px] text-[#333] leading-[22px] shrink-0">Log Mes</div>
            <div className="h-[28px] w-[60px] shrink-0 bg-[#e4e4e4] border border-[#c4c4c4] rounded-t-[3px] flex items-center pl-[11px] text-[13px] text-[#333] whitespace-nowrap overflow-hidden">Pytho</div>
            <div className="h-[74px] w-[575px] shrink-0 bg-white border-2 border-[#bcbcbc] px-[4px] py-[5px] text-[13px] text-[#c87a1a]">2020-0</div>
          </div>
          <ProcessingPanel />
        </div>

        <StatusBar />
      </div>

      <AttributeTable />
    </div>
  );
}
